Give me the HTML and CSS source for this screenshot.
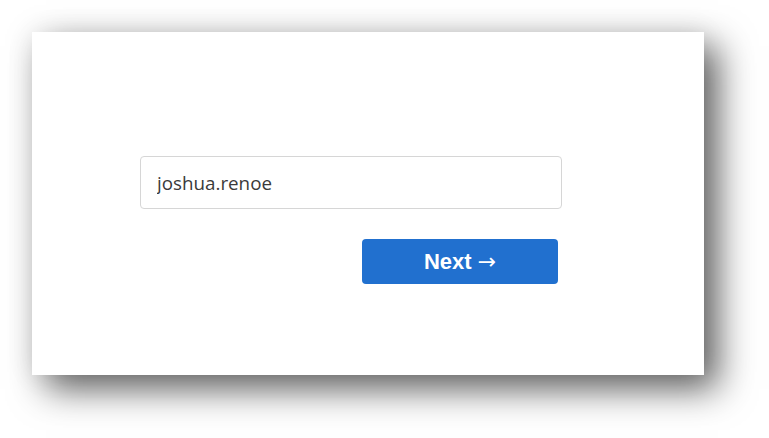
FILE: index.html
```html
<!DOCTYPE html>
<html lang="en">
<head>
<meta charset="utf-8">
<link rel="stylesheet" href="styles.css">
</head>
<body>
<div class="card">
  <form class="login">
    <input class="field" type="text" value="joshua.renoe">
    <div class="actions">
      <button class="next" type="button">Next <span class="arrow">→</span></button>
    </div>
  </form>
</div>
</body>
</html>
```
FILE: styles.css
```css
html, body {
  margin: 0;
  background: #ffffff;
}
body {
  padding: 32px;
  width: 769px;
  height: 438px;
  box-sizing: border-box;
  overflow: hidden;
}
.card {
  width: 672px;
  height: 343px;
  background: #ffffff;
  box-shadow: 14px 14px 34px rgba(0, 0, 0, 0.62), 0 0 28px rgba(0, 0, 0, 0.07);
  box-sizing: border-box;
  padding: 124px 0 0 108px;
}
.login {
  width: 422px;
  display: flex;
  flex-direction: column;
  margin: 0;
}
.field {
  box-sizing: border-box;
  width: 422px;
  height: 53px;
  border: 1px solid #d6d6d6;
  border-radius: 4px;
  padding: 0 16px;
  font-family: "Open Sans", "Noto Sans", sans-serif;
  font-size: 18.8px;
  color: #3a3a3a;
  outline: none;
  background: #ffffff;
}
.actions {
  display: flex;
  justify-content: flex-end;
  margin-top: 30px;
  padding-right: 4px;
}
.next {
  width: 196px;
  height: 45px;
  border: none;
  border-radius: 4px;
  background: #2170cf;
  color: #ffffff;
  font-family: "Liberation Sans", Arial, sans-serif;
  font-weight: bold;
  font-size: 22px;
  cursor: pointer;
  padding: 0;
}
.arrow {
  font-family: "DejaVu Sans", sans-serif;
  font-weight: normal;
  font-size: 22px;
}
```
